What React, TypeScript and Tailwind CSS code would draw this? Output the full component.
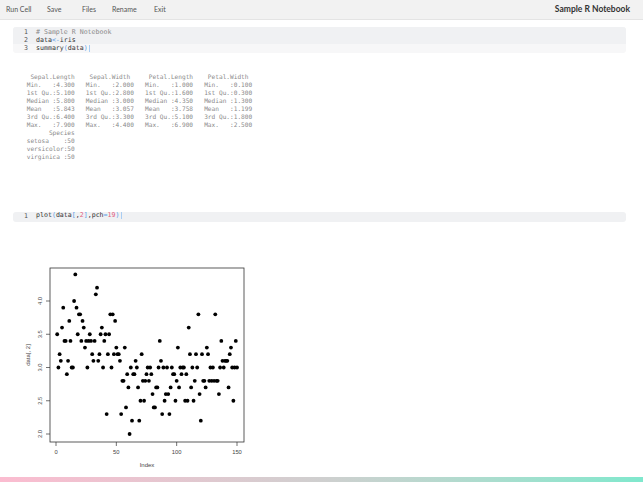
import React from "react";

const sepalWidth = [
  3.5, 3.0, 3.2, 3.1, 3.6, 3.9, 3.4, 3.4, 2.9, 3.1, 3.7, 3.4, 3.0, 3.0, 4.0, 4.4, 3.9, 3.5, 3.8, 3.8,
  3.4, 3.7, 3.6, 3.3, 3.4, 3.0, 3.4, 3.5, 3.4, 3.2, 3.1, 3.4, 4.1, 4.2, 3.1, 3.2, 3.5, 3.6, 3.0, 3.4,
  3.5, 2.3, 3.2, 3.5, 3.8, 3.0, 3.8, 3.2, 3.7, 3.3, 3.2, 3.2, 3.1, 2.3, 2.8, 2.8, 3.3, 2.4, 2.9, 2.7,
  2.0, 3.0, 2.2, 2.9, 2.9, 3.1, 3.0, 2.7, 2.2, 2.5, 3.2, 2.8, 2.5, 2.8, 2.9, 3.0, 2.8, 3.0, 2.9, 2.6,
  2.4, 2.4, 2.7, 2.7, 3.0, 3.4, 3.1, 2.3, 3.0, 2.5, 2.6, 3.0, 2.6, 2.3, 2.7, 3.0, 2.9, 2.9, 2.5, 2.8,
  3.3, 2.7, 3.0, 2.9, 3.0, 3.0, 2.5, 2.9, 2.5, 3.6, 3.2, 2.7, 3.0, 2.5, 2.8, 3.2, 3.0, 3.8, 2.6, 2.2,
  3.2, 2.8, 2.8, 2.7, 3.3, 3.2, 2.8, 3.0, 2.8, 3.0, 2.8, 3.8, 2.8, 2.8, 2.6, 3.0, 3.4, 3.1, 3.0, 3.1,
  3.1, 3.1, 2.7, 3.2, 3.3, 3.0, 2.5, 3.0, 3.4, 3.0,
];

const summaryText = `  Sepal.Length    Sepal.Width     Petal.Length    Petal.Width   
 Min.   :4.300   Min.   :2.000   Min.   :1.000   Min.   :0.100  
 1st Qu.:5.100   1st Qu.:2.800   1st Qu.:1.600   1st Qu.:0.300  
 Median :5.800   Median :3.000   Median :4.350   Median :1.300  
 Mean   :5.843   Mean   :3.057   Mean   :3.758   Mean   :1.199  
 3rd Qu.:6.400   3rd Qu.:3.300   3rd Qu.:5.100   3rd Qu.:1.800  
 Max.   :7.900   Max.   :4.400   Max.   :6.900   Max.   :2.500  
       Species  
 setosa    :50  
 versicolor:50  
 virginica :50  `;

const menu = ["Run Cell", "Save", "Files", "Rename", "Exit"];

const px = (i: number) => 56 + i * (181 / 150);
const py = (v: number) => 433 - (v - 2) * 66.5;

function Plot() {
  return (
    <svg width={240} height={215} viewBox="20 258 240 215" className="ml-[20px] mt-[37px] block">
      <rect x={50} y={267} width={194} height={174} fill="none" stroke="#333" strokeWidth={0.8} />
      {[0, 50, 100, 150].map((t) => (
        <g key={t}>
          <line x1={px(t)} y1={441} x2={px(t)} y2={445} stroke="#333" strokeWidth={0.7} />
          <text x={px(t)} y={453} fontSize={5.8} fill="#444" textAnchor="middle" fontFamily="Liberation Sans, Arial, sans-serif">
            {String(t)}
          </text>
        </g>
      ))}
      {[2.0, 2.5, 3.0, 3.5, 4.0].map((v) => (
        <g key={v}>
          <line x1={46} y1={py(v)} x2={50} y2={py(v)} stroke="#333" strokeWidth={0.7} />
          <text
            x={42}
            y={py(v)}
            fontSize={5.8}
            fill="#444"
            textAnchor="middle"
            fontFamily="Liberation Sans, Arial, sans-serif"
            transform={`rotate(-90 42 ${py(v)})`}
          >
            {v.toFixed(1)}
          </text>
        </g>
      ))}
      <text x={147} y={466} fontSize={6} fill="#444" textAnchor="middle" fontFamily="Liberation Sans, Arial, sans-serif">
        Index
      </text>
      <text
        x={30}
        y={354}
        fontSize={6}
        fill="#444"
        textAnchor="middle"
        fontFamily="Liberation Sans, Arial, sans-serif"
        transform="rotate(-90 30 354)"
      >
        data[, 2]
      </text>
      {sepalWidth.map((v, i) => (
        <circle key={i} cx={px(i + 1)} cy={py(v)} r={1.9} fill="#000" />
      ))}
    </svg>
  );
}

export default function App() {
  return (
    <div className="relative flex h-[482px] w-[643px] flex-col overflow-hidden bg-white">
      <div className="flex h-[20px] items-center border-b border-[#e4e4e4] bg-[#f2f2f2] pl-[6px] pr-[13px] font-['Lato','Open_Sans',sans-serif]">
        {menu.map((m, i) => (
          <span
            key={m}
            className={
              "text-[7px] text-[#555] " +
              (i === 0 ? "w-[41px]" : i === 1 ? "w-[35px]" : i === 2 ? "w-[30px]" : i === 3 ? "w-[42px]" : "")
            }
          >
            {m}
          </span>
        ))}
        <span className="ml-auto text-[8.5px] font-bold text-[#333]">Sample R Notebook</span>
      </div>

      <div className="flex-1 font-['DejaVu_Sans_Mono',monospace]">
        <div className="ml-[13px] mt-[7px] w-[613px] overflow-hidden rounded-[3px] bg-[#f7f7f8] text-[6.6px] leading-[8px]">
          <div className="bg-[#f0f1f3] pt-[1px]">
            <div className="flex">
              <span className="w-[15px] text-right text-[#555]">1</span>
              <span className="ml-[8px] text-[#8a8a8a]"># Sample R Notebook</span>
            </div>
            <div className="flex">
              <span className="w-[15px] text-right text-[#555]">2</span>
              <span className="ml-[8px] text-[#333]">
                data<span className="text-[#5a9be6]">&lt;-</span>iris
              </span>
            </div>
          </div>
          <div className="flex pb-[0.5px]">
            <span className="w-[15px] text-right text-[#555]">3</span>
            <span className="ml-[8px] text-[#333]">
              summary<span className="text-[#5a9be6]">(</span>data<span className="text-[#5a9be6]">)</span>
              <span className="ml-px inline-block h-[7px] w-px bg-[#a9cdf3] align-middle" />
            </span>
          </div>
        </div>

        <pre className="ml-[23px] mt-[20px] font-['DejaVu_Sans_Mono',monospace] text-[6.15px] leading-[8px] text-[#8a8a8a]">
          {summaryText}
        </pre>

        <div className="ml-[13px] mt-[51px] flex h-[10px] w-[613px] items-center rounded-[3px] bg-[#f0f1f3] text-[6.6px] leading-[7.8px]">
          <span className="w-[15px] text-right text-[#555]">1</span>
          <span className="ml-[8px] text-[#333]">
            plot<span className="text-[#5a9be6]">(</span>data<span className="text-[#5a9be6]">[</span>,
            <span className="text-[#e0607e]">2</span>
            <span className="text-[#5a9be6]">]</span>,pch<span className="text-[#5a9be6]">=</span>
            <span className="text-[#e0607e]">19</span>
            <span className="text-[#5a9be6]">)</span>
            <span className="ml-px inline-block h-[7px] w-px bg-[#a9cdf3] align-middle" />
          </span>
        </div>

        <Plot />
      </div>

      <div className="h-[5px] w-full bg-gradient-to-r from-[#fbbcd0] via-[#cfcfcf] to-[#7fe8cd]" />
    </div>
  );
}
